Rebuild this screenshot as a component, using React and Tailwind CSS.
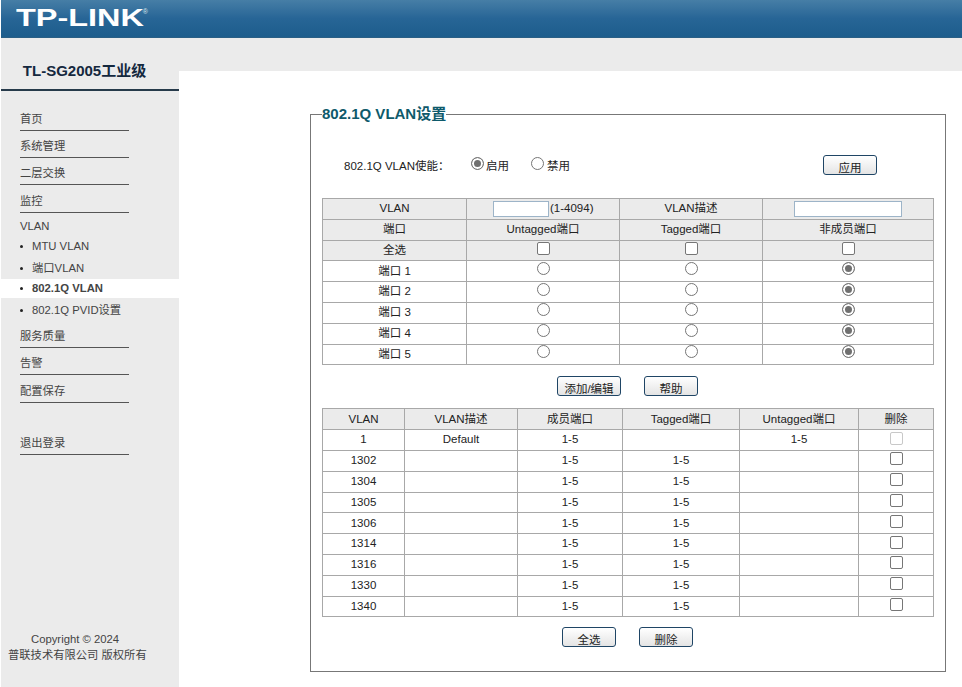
// App.jsx
import React from "react";

const fontStack = "font-['Liberation_Sans','Noto_Sans_CJK_SC',sans-serif]";

const navTop = ["首页", "系统管理", "二层交换", "监控"];
const vlanItems = [
  { label: "MTU VLAN", rowClass: "h-[22px]" },
  { label: "端口VLAN", rowClass: "h-[21px]" },
  { label: "802.1Q VLAN", rowClass: "h-[19px] bg-white font-bold text-[#1c2c3c]" },
  { label: "802.1Q PVID设置", rowClass: "h-[23px] pt-[3px]" },
];
const navBottom = ["服务质量", "告警", "配置保存"];

const memberRows = [1302, 1304, 1305, 1306, 1314, 1316, 1330, 1340];

const NavLink = ({ label }) => (
  <div className="ml-[19px] w-[109px] h-[27.3px] flex items-end pb-[3px] border-b border-[#555] text-[#444] leading-4">
    {label}
  </div>
);

const Radio = ({ checked, name, className = "" }) => (
  <input
    type="radio"
    name={name}
    defaultChecked={checked}
    className={`appearance-none w-[13px] h-[13px] rounded-full border border-[#767676] bg-white checked:bg-[#707070] checked:shadow-[inset_0_0_0_2px_#fff] ${className}`}
  />
);

const Check = ({ disabled }) => (
  <input
    type="checkbox"
    disabled={disabled}
    className={`appearance-none w-[13px] h-[13px] rounded-[2px] border bg-white relative top-[-2px] align-middle ${
      disabled ? "border-[#c8c8c8] bg-[#f2f2f2]" : "border-[#767676]"
    }`}
  />
);

const Btn = ({ children, className = "w-[54px]" }) => (
  <button
    className={`h-[20px] rounded-[3px] border border-[#1f4565] bg-gradient-to-b from-white to-[#e4e4e4] text-[#222] text-[11.5px] leading-none pt-[7px] ${className}`}
  >
    {children}
  </button>
);

const Cell = ({ children, head }) => (
  <td className={`border border-[#a8a8a8] p-0 text-center leading-none ${head ? "bg-[#ebebeb]" : ""}`}>
    {children}
  </td>
);

const PortTable = () => (
  <table className="w-[611px] table-fixed border-collapse text-[11.5px] text-[#222]">
    <colgroup>
      <col className="w-[144px]" />
      <col className="w-[153px]" />
      <col className="w-[143px]" />
      <col className="w-[171px]" />
    </colgroup>
    <tbody>
      <tr className="h-[20.8px]">
        <Cell head>VLAN</Cell>
        <Cell head>
          <div className="flex items-center pl-[26px]">
            <input type="text" className="w-[56px] h-[16px] bg-white border border-[#9db4c8] outline-none" />
            <span className="ml-px">(1-4094)</span>
          </div>
        </Cell>
        <Cell head>VLAN描述</Cell>
        <Cell head>
          <input type="text" className="w-[108px] h-[16px] bg-white border border-[#9db4c8] outline-none align-middle" />
        </Cell>
      </tr>
      <tr className="h-[20.8px]">
        <Cell head>端口</Cell>
        <Cell head>Untagged端口</Cell>
        <Cell head>Tagged端口</Cell>
        <Cell head>非成员端口</Cell>
      </tr>
      <tr className="h-[20.8px]">
        <Cell head>全选</Cell>
        <Cell head><Check /></Cell>
        <Cell head><Check /></Cell>
        <Cell head><Check /></Cell>
      </tr>
      {[1, 2, 3, 4, 5].map((port) => (
        <tr key={port} className="h-[20.8px]">
          <Cell>端口 {port}</Cell>
          <Cell><Radio name={`port${port}`} className="relative top-[-3px] align-middle" /></Cell>
          <Cell><Radio name={`port${port}`} className="relative top-[-3px] align-middle" /></Cell>
          <Cell><Radio name={`port${port}`} checked className="relative top-[-3px] align-middle" /></Cell>
        </tr>
      ))}
    </tbody>
  </table>
);

const MemberTable = () => (
  <table className="w-[611px] table-fixed border-collapse text-[11.5px] text-[#222]">
    <colgroup>
      <col className="w-[82px]" />
      <col className="w-[113px]" />
      <col className="w-[105px]" />
      <col className="w-[117px]" />
      <col className="w-[119px]" />
      <col className="w-[75px]" />
    </colgroup>
    <tbody>
      <tr className="h-[20.8px]">
        {["VLAN", "VLAN描述", "成员端口", "Tagged端口", "Untagged端口", "删除"].map((header) => (
          <Cell key={header} head>{header}</Cell>
        ))}
      </tr>
      <tr className="h-[20.8px]">
        <Cell>1</Cell>
        <Cell>Default</Cell>
        <Cell>1-5</Cell>
        <Cell></Cell>
        <Cell>1-5</Cell>
        <Cell><Check disabled /></Cell>
      </tr>
      {memberRows.map((vlan) => (
        <tr key={vlan} className="h-[20.8px]">
          <Cell>{vlan}</Cell>
          <Cell></Cell>
          <Cell>1-5</Cell>
          <Cell>1-5</Cell>
          <Cell></Cell>
          <Cell><Check /></Cell>
        </tr>
      ))}
    </tbody>
  </table>
);

const App = () => {
  return (
    <div className={`w-[962px] h-[687px] overflow-hidden pl-px bg-white flex flex-col text-[11.5px] ${fontStack}`}>
      <header className="h-[38px] shrink-0 bg-gradient-to-b from-[#467ea6] via-[#276596] to-[#1d5d8c] border-b border-[#2a5f85] pl-[15px] flex items-center">
        <span className="text-white font-bold text-[23px] leading-none scale-x-[1.41] origin-left font-['Liberation_Sans',sans-serif]">
          TP-LINK
        </span>
        <span className="ml-[36px] mb-[14px] text-[7px] leading-none text-[#d8e4ec]">®</span>
      </header>

      <div className="flex-1 flex min-h-0">
        <aside className="w-[178px] shrink-0 bg-[#ebebeb] flex flex-col text-[11.3px]">
          <div className="h-[52.5px] shrink-0 border-b-2 border-[#263a4a] flex items-end justify-center pb-[10px] pr-[11px]">
            <span className="text-[15px] leading-4 font-bold text-[#14283e]">TL-SG2005工业级</span>
          </div>
          <nav className="pt-[13px]">
            {navTop.map((label) => (
              <NavLink key={label} label={label} />
            ))}
            <div className="ml-[19px] h-[21px] flex items-end text-[#444] leading-4">VLAN</div>
            <div className="pt-[2px]">
              {vlanItems.map((item) => (
                <div key={item.label} className={`flex items-center pl-[19px] text-[#444] ${item.rowClass}`}>
                  <span className="w-[3px] h-[3px] rounded-full bg-[#222] mr-[9px]"></span>
                  {item.label}
                </div>
              ))}
            </div>
            {navBottom.map((label) => (
              <NavLink key={label} label={label} />
            ))}
            <div className="ml-[19px] mt-[25px] w-[109px] h-[27px] flex items-end pb-[3px] border-b border-[#555] text-[#444] leading-4">
              退出登录
            </div>
          </nav>
          <div className="mt-auto pb-[24px] pl-[7px] text-[#444] leading-4">
            <div className="pl-[23px]">Copyright © 2024</div>
            <div>普联技术有限公司 版权所有</div>
          </div>
        </aside>

        <div className="flex-1 flex flex-col min-w-0">
          <div className="h-[33px] shrink-0 bg-[#ebebeb]"></div>
          <main className="flex-1 pl-[131px] pt-[33px]">
            <fieldset className="w-[636px] h-[568px] border border-[#777] px-[11px]">
              <legend className="text-[15px] leading-5 font-bold text-[#0e5a6b]">802.1Q VLAN设置</legend>
              <div className="h-[74px] pt-[31px] flex items-start text-[#222]">
                <span className="ml-[22px] w-[127px] pt-[3px] leading-4">802.1Q VLAN使能：</span>
                <Radio name="enable" checked className="mt-[2px]" />
                <span className="ml-[2px] w-[45px] pt-[3px] leading-4">启用</span>
                <Radio name="enable" className="mt-[2px]" />
                <span className="ml-[3px] pt-[3px] leading-4">禁用</span>
                <Btn className="w-[54px] ml-auto mr-[57px]">应用</Btn>
              </div>
              <PortTable />
              <div className="h-[43px] pt-[11px] flex pl-[235px] gap-[23px]">
                <Btn className="w-[64px]">添加/编辑</Btn>
                <Btn>帮助</Btn>
              </div>
              <MemberTable />
              <div className="pt-[10px] flex pl-[240px] gap-[23px]">
                <Btn>全选</Btn>
                <Btn>删除</Btn>
              </div>
            </fieldset>
          </main>
        </div>
      </div>
    </div>
  );
};

export default App;
